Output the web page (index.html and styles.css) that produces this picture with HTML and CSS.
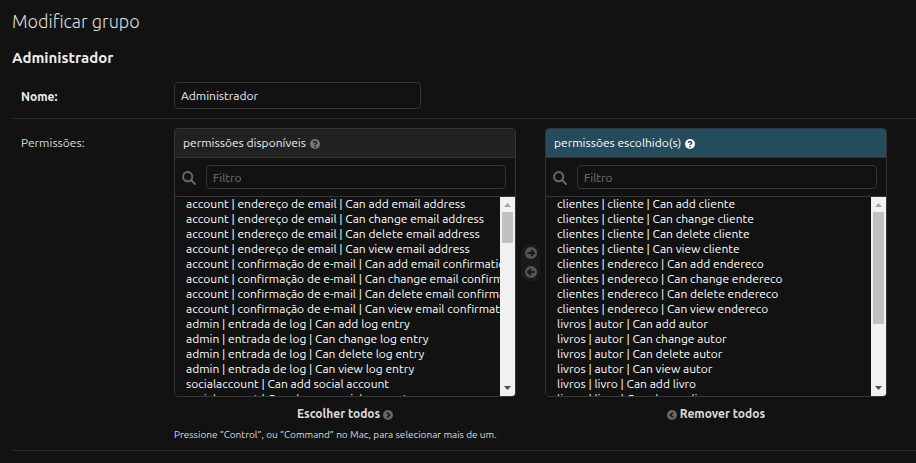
FILE: index.html
```html
<!DOCTYPE html>
<html lang="pt-br">
<head>
<meta charset="utf-8">
<title>Modificar grupo</title>
<link rel="stylesheet" href="styles.css">
</head>
<body>
<main class="content">
  <h1>Modificar grupo</h1>
  <h2>Administrador</h2>
  <form>
    <div class="form-row name-row">
      <label class="required" for="id_name">Nome:</label>
      <input class="text-field" type="text" id="id_name" value="Administrador">
    </div>
    <div class="form-row">
      <label for="available">Permissões:</label>
      <div class="field">
        <div class="selector">
          <section class="panel">
            <h3>permissões disponíveis
              <svg class="help" viewBox="0 0 10 10" aria-hidden="true"><circle cx="5" cy="5" r="5"/><path d="M3.3 4Q3.5 2.4 5 2.4T6.7 3.8C6.7 4.9 5 4.7 5 6.2M5 7v1.4"/></svg>
            </h3>
            <div class="filter">
              <label for="filter-available" aria-label="Filtro"><svg class="search" viewBox="0 0 14 14"><circle cx="5.7" cy="5.7" r="4.6"/><path d="M9 9l4 4"/></svg></label>
              <input type="text" id="filter-available" placeholder="Filtro">
            </div>
            <div class="list">
              <select multiple id="available"></select>
              <div class="scrollbar" aria-hidden="true">
                <svg class="up" viewBox="0 0 15 15"><path d="M7.5 6L11 10H4z"/></svg>
                <div class="track"><div class="thumb"></div></div>
                <svg class="down" viewBox="0 0 15 15"><path d="M4 5h7L7.500 9z"/></svg>
              </div>
            </div>
          </section>
          <div class="chooser">
            <button type="button" aria-label="Escolher"><svg viewBox="0 0 12 12"><circle cx="6" cy="6" r="6"/><path d="M2.500 6h6M6 3l3 3-3 3"/></svg></button>
            <button type="button" aria-label="Remover"><svg viewBox="0 0 12 12"><circle cx="6" cy="6" r="6"/><path d="M9.500 6h-6M6 3L3 6l3 3"/></svg></button>
          </div>
          <section class="panel chosen">
            <h3>permissões escolhido(s)
              <svg class="help" viewBox="0 0 10 10" aria-hidden="true"><circle cx="5" cy="5" r="5"/><path d="M3.3 4Q3.5 2.4 5 2.4T6.7 3.8C6.7 4.9 5 4.7 5 6.2M5 7v1.4"/></svg>
            </h3>
            <div class="filter">
              <label for="filter-chosen" aria-label="Filtro"><svg class="search" viewBox="0 0 14 14"><circle cx="5.7" cy="5.7" r="4.6"/><path d="M9 9l4 4"/></svg></label>
              <input type="text" id="filter-chosen" placeholder="Filtro">
            </div>
            <div class="list">
              <select multiple id="chosen" aria-label="permissões escolhido(s)"></select>
              <div class="scrollbar" aria-hidden="true">
                <svg class="up" viewBox="0 0 15 15"><path d="M7.5 6L11 10H4z"/></svg>
                <div class="track"><div class="thumb"></div></div>
                <svg class="down" viewBox="0 0 15 15"><path d="M4 5h7L7.5 9z"/></svg>
              </div>
            </div>
          </section>
          <a class="all" href="#available">Escolher todos <svg viewBox="0 0 10 10"><circle cx="5" cy="5" r="5"/><path d="M4 2.5L6.5 5 4 7.5"/></svg></a>
          <a class="all remove" href="#chosen"><svg viewBox="0 0 10 10"><circle cx="5" cy="5" r="5"/><path d="M6 2.5L3.5 5 6 7.5"/></svg> Remover todos</a>
        </div>
        <p class="hint">Pressione “Control”, ou “Command” no Mac, para selecionar mais de um.</p>
      </div>
    </div>
  </form>
</main>
<script src="script.js"></script>
</body>
</html>
```
FILE: styles.css
```css
* { box-sizing: border-box; }

body {
  margin: 0;
  background: #121212;
  color: #eee;
  font: 12px/16px Ubuntu, "Noto Sans", sans-serif;
}

.content { padding: 8px 0 0 12px; }

h1 {
  margin: 0 0 16px;
  font-size: 18px;
  line-height: 26px;
  font-weight: 300;
  color: #ddd;
}

h2 {
  margin: 0 0 14px;
  font-size: 15px;
  line-height: 16px;
  font-weight: 700;
}

.form-row {
  display: grid;
  grid-template-columns: 153px 1fr;
  padding: 9px 0 9px 9px;
  border-bottom: 1px solid #272727;
}

.name-row { padding-top: 2px; }
.form-row > label { padding-top: 7px; color: #ddd; }
.form-row > label.required { font-weight: 700; color: #eee; }

input {
  height: 24px;
  padding: 0 6px;
  border: 1px solid #353535;
  border-radius: 4px;
  background: #121212;
  color: #eee;
  font: inherit;
}

input::placeholder { color: #757575; opacity: 1; }
.text-field { width: 247px; height: 27px; }

.selector {
  display: grid;
  grid-template-columns: 342px 29px 342px;
}

.panel {
  border: 1px solid #353535;
  border-radius: 4px;
  overflow: hidden;
}

.panel h3 {
  margin: 0;
  padding: 6px 8px;
  border-bottom: 1px solid #353535;
  background: #212121;
  font-size: 12px;
  line-height: 16px;
  font-weight: 400;
}

.chosen h3 { background: #264b5d; color: #fff; }

.help { width: 10px; height: 10px; margin-left: 1px; vertical-align: -2px; }
.help circle { fill: #777; }
.help path { fill: none; stroke: #212121; stroke-width: 1.5; }
.chosen .help circle { fill: #fff; }
.chosen .help path { stroke: #264b5d; }

.filter {
  display: flex;
  gap: 10px;
  padding: 7px 9px 7px 7px;
  border-bottom: 1px solid #353535;
}

.filter label { display: flex; align-items: end; padding-bottom: 4px; }
.filter input { flex: 1; min-width: 0; }
.search { width: 14px; height: 14px; fill: none; stroke: #666; stroke-width: 2; stroke-linecap: round; }

.list {
  display: grid;
  grid-template-columns: minmax(0, 1fr) 15px;
  height: 199px;
}

select {
  display: block;
  width: 100%;
  height: 199px;
  padding: 0 0 0 11px;
  border: 0;
  background: #121212;
  color: #fff;
  font: inherit;
  outline: 0;
  scrollbar-width: none;
}

option { min-height: 0; height: 15px; padding: 0; line-height: 15px; }

.scrollbar {
  display: flex;
  flex-direction: column;
  background: #f1f1f1;
}

.scrollbar svg { width: 15px; height: 15px; }
.up { fill: #a3a3a3; }
.down { fill: #505050; }
.track { flex: 1; padding: 0 2px; }
.thumb { background: #c1c1c1; }

.chooser {
  align-self: center;
  justify-self: center;
  display: grid;
  width: 19px;
  border-radius: 10px;
  background: #1b1b1b;
}

.chooser button {
  display: grid;
  place-items: center;
  height: 19px;
  padding: 0;
  border: 0;
  background: none;
}

.chooser svg { width: 12px; height: 12px; }
.chooser circle { fill: #555; }
.chooser path { fill: none; stroke: #1b1b1b; stroke-width: 2; }

.all {
  grid-column: 1;
  justify-self: center;
  margin-top: 9px;
  color: #ddd;
  font-weight: 700;
  text-decoration: none;
}

.all.remove { grid-column: 3; }
.all svg { width: 10px; height: 10px; vertical-align: -2px; }
.all circle { fill: #666; }
.all path { fill: none; stroke: #121212; stroke-width: 1.5; }

.hint { margin: 7px 0 0; color: #ddd; font-size: 10px; line-height: 12px; }
```
FILE: script.js
```js
const actions = ["add", "change", "delete", "view"];

const available = [
  ["account | endereço de email", "email address"],
  ["account | confirmação de e-mail", "email confirmation"],
  ["admin | entrada de log", "log entry"],
  ["socialaccount", "social account"],
  ["socialaccount", "social application"],
  ["socialaccount", "social application token"],
  ["auth | grupo", "group"],
  ["auth | permissão", "permission"],
  ["auth | usuário", "user"],
  ["contenttypes | tipo de conteúdo", "content type"],
  ["sessions | sessão", "session"],
  ["sites | site", "site"],
  ["pedidos | pedido", "pedido"],
  ["pedidos | item", "item"],
  ["pedidos | cupom", "cupom"],
  ["pedidos | entrega", "entrega"],
  ["pedidos | pagamento", "pagamento"],
  ["usuarios | usuario", "usuario"]
];

const chosen = [
  ["clientes | cliente", "cliente"],
  ["clientes | endereco", "endereco"],
  ["livros | autor", "autor"],
  ["livros | livro", "livro"],
  ["livros | editora", "editora"]
];

function fill(id, models) {
  const select = document.getElementById(id);
  for (const [path, name] of models) {
    for (const action of actions) {
      select.add(new Option(`${path} | Can ${action} ${name}`));
    }
  }

  const track = select.parentElement.querySelector(".track");
  const thumb = track.firstElementChild;
  const scale = track.clientHeight / select.scrollHeight;
  thumb.style.height = `${Math.round(select.clientHeight * scale)}px`;
  select.addEventListener("scroll", () => {
    thumb.style.marginTop = `${Math.round(select.scrollTop * scale)}px`;
  });
}

fill("available", available);
fill("chosen", chosen);
```
